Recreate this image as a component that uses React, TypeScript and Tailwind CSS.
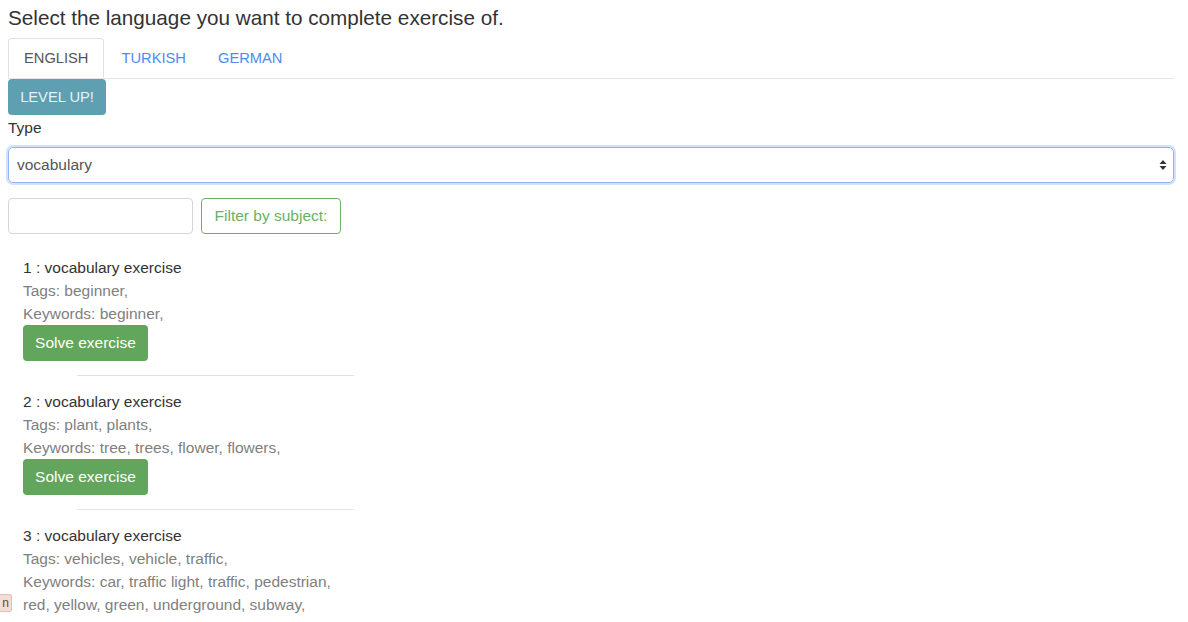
export default function App() {
  const items = [
    {
      id: 1,
      tags: "beginner,",
      keywords: "beginner,",
    },
    {
      id: 2,
      tags: "plant, plants,",
      keywords: "tree, trees, flower, flowers,",
    },
    {
      id: 3,
      tags: "vehicles, vehicle, traffic,",
      keywords: "car, traffic light, traffic, pedestrian, red, yellow, green, underground, subway,",
    },
  ]

  return (
    <div className="relative min-h-[622px] bg-white px-[8px] text-[15.5px] text-[#333] font-['Liberation_Sans',Arial,sans-serif] overflow-hidden">
      <p className="pt-[6px] text-[20.7px] leading-[24px] text-[#333]">
        Select the language you want to complete exercise of.
      </p>

      {/* language tabs */}
      <div className="mt-[8px] mr-[6px] flex border-b border-[#e6e6e6] text-[14.7px]">
        <div className="-mb-px mr-[2px] px-[15px] h-[40px] flex items-center border border-[#e0e0e0] border-b-white rounded-t-[4px] bg-white text-[#555]">
          ENGLISH
        </div>
        <div className="mr-[2px] px-[15px] h-[40px] flex items-center text-[#4b8cf0]">TURKISH</div>
        <div className="px-[15px] h-[40px] flex items-center text-[#4b8cf0]">GERMAN</div>
      </div>

      <button className="h-[36px] w-[98px] rounded-[4px] bg-[#5e9fb1] text-[14.7px] text-[#e8f2f5]">
        LEVEL UP!
      </button>

      <div className="mt-[3px] leading-[20px] text-[#333]">Type</div>

      <div className="mt-[9px] mr-[6px] h-[36px] flex items-center justify-between rounded-[5px] border border-[#8fb4f6] shadow-[0_0_0_2px_#d3e1fc] px-[8px] text-[#555]">
        <span>vocabulary</span>
        <svg width="8" height="12" viewBox="0 0 8 12" className="mr-[-2px]">
          <path d="M4 1 L7.5 5 L0.5 5 Z" fill="#333" />
          <path d="M4 11 L7.5 7 L0.5 7 Z" fill="#333" />
        </svg>
      </div>

      {/* filter */}
      <div className="mt-[15px] flex gap-[8px]">
        <div className="h-[36px] w-[185px] rounded-[4px] border border-[#d5d5d5] bg-white" />
        <button className="h-[36px] w-[140px] rounded-[4px] border border-[#6ab264] text-[#6ab264] text-[15.5px]">
          Filter by subject:
        </button>
      </div>

      {/* exercise list */}
      <div className="mt-[22px] pl-[15px]">
        {items.map((item) => (
          <div key={item.id}>
            <div className="leading-[23px] text-[#333]">{item.id} : vocabulary exercise</div>
            <div className="leading-[23px] text-[#808080]">Tags: {item.tags}</div>
            <div className="w-[331px] leading-[23px] text-[#808080]">Keywords: {item.keywords}</div>
            {item.id < 3 && (
              <>
                <button className="h-[36px] w-[125px] rounded-[4px] bg-[#62a55c] text-[15.5px] text-white">
                  Solve exercise
                </button>
                <div className="ml-[54px] mt-[14px] mb-[14px] w-[277px] border-t border-[#e2e2e2]" />
              </>
            )}
          </div>
        ))}
      </div>

      {/* badge peeking from the left edge */}
      <div className="absolute left-0 top-[594px] h-[18px] w-[12px] overflow-hidden rounded-r-[3px] border border-l-0 border-[#e0bfb6] bg-[#f4ddd6]">
        <span className="absolute right-[2px] top-0 text-[12px] leading-[17px] text-[#6b4a40]">n</span>
      </div>
    </div>
  )
}
